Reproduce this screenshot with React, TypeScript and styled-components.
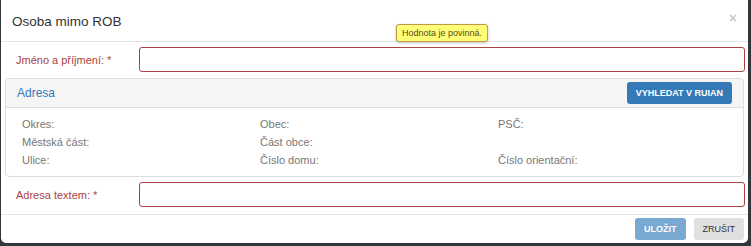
import React from 'react'
import styled, { createGlobalStyle } from 'styled-components'

const GlobalStyle = createGlobalStyle`
  html, body {
    margin: 0;
    padding: 0;
    background: #34373a;
    font-family: 'Liberation Sans', Arial, sans-serif;
  }
`

const Backdrop = styled.div`
  width: 751px;
  height: 246px;
  padding: 0 3px 3px 1px;
  box-sizing: border-box;
  overflow: hidden;
`

const Modal = styled.div`
  position: relative;
  width: 747px;
  height: 243px;
  background: #fff;
  border-radius: 0 0 5px 5px;
  display: flex;
  flex-direction: column;
  color: #333;
`

const Header = styled.div`
  height: 41px;
  border-bottom: 1px solid #e5e5e5;
  display: flex;
  align-items: center;
  justify-content: space-between;
  padding: 0 11px 0 11px;
  flex-shrink: 0;
`

const Title = styled.h4`
  margin: 0;
  font-size: 13.5px;
  font-weight: normal;
  color: #333;
  padding-top: 1px;
`

const Close = styled.span`
  font-size: 14px;
  font-weight: bold;
  color: #000;
  opacity: 0.2;
  line-height: 1;
  margin-top: -6px;
`

const Body = styled.div`
  padding: 5px 3px 0 4px;
`

const FormRow = styled.div`
  display: grid;
  grid-template-columns: 123px 1fr;
  align-items: center;
  padding-left: 11px;
`

const Label = styled.label`
  font-size: 11px;
  color: #a94442;
`

const Input = styled.input`
  height: 25px;
  box-sizing: border-box;
  border: 1px solid #a94442;
  border-radius: 3px;
  background: #fff;
  outline: none;
  width: 100%;
`

const Panel = styled.div`
  margin: 6px 1px 5px 0;
  border: 1px solid #ddd;
  border-radius: 4px;
  overflow: hidden;
`

const PanelHeading = styled.div`
  height: 28px;
  background: #f5f5f5;
  border-bottom: 1px solid #ddd;
  display: flex;
  align-items: center;
  justify-content: space-between;
  padding: 0 11px 0 11px;
`

const PanelTitle = styled.span`
  font-size: 12px;
  color: #337ab7;
`

const Button = styled.button<{ $variant: 'primary' | 'default'; $disabled?: boolean }>`
  font-family: 'Liberation Sans', Arial, sans-serif;
  height: 22px;
  border: none;
  border-radius: 3px;
  padding: 0 9px;
  font-size: 9px;
  font-weight: ${({ $variant }) => ($variant === 'primary' ? 'bold' : 'normal')};
  background: ${({ $variant }) => ($variant === 'primary' ? '#337ab7' : '#e0e0e0')};
  color: ${({ $variant }) => ($variant === 'primary' ? '#fff' : '#333')};
  opacity: ${({ $disabled }) => ($disabled ? 0.65 : 1)};
  cursor: pointer;
`

const PanelBody = styled.div`
  display: grid;
  grid-template-columns: repeat(3, 238px);
  grid-auto-rows: 18px;
  padding: 7px 0 7px 16px;
  align-items: center;
`

const Field = styled.span`
  font-size: 11px;
  color: #777;
`

const Footer = styled.div`
  margin-top: auto;
  height: 29px;
  border-top: 1px solid #e5e5e5;
  display: flex;
  align-items: center;
  justify-content: flex-end;
  gap: 8px;
  padding: 0 4px 0 0;
  box-sizing: border-box;
`

const Tooltip = styled.div`
  position: absolute;
  left: 395px;
  top: 24px;
  height: 18px;
  padding: 0 5px;
  box-sizing: border-box;
  display: flex;
  align-items: center;
  font-size: 9px;
  color: #5a4a1a;
  background: #ffff77;
  border: 1px solid #c09a4a;
  border-radius: 3px;
  box-shadow: 0 1px 3px rgba(0, 0, 0, 0.25);
`

const fields = [
  'Okres:', 'Obec:', 'PSČ:',
  'Městská část:', 'Část obce:', '',
  'Ulice:', 'Číslo domu:', 'Číslo orientační:'
]

const App: React.FC = () => {
  return (
    <Backdrop>
      <GlobalStyle />
      <Modal>
        <Header>
          <Title>Osoba mimo ROB</Title>
          <Close>×</Close>
        </Header>
        <Body>
          <FormRow>
            <Label>Jméno a příjmení: *</Label>
            <Input />
          </FormRow>
          <Panel>
            <PanelHeading>
              <PanelTitle>Adresa</PanelTitle>
              <Button $variant="primary">VYHLEDAT V RUIAN</Button>
            </PanelHeading>
            <PanelBody>
              {fields.map((f, i) => (
                <Field key={i}>{f}</Field>
              ))}
            </PanelBody>
          </Panel>
          <FormRow>
            <Label>Adresa textem: *</Label>
            <Input />
          </FormRow>
        </Body>
        <Footer>
          <Button $variant="primary" $disabled>ULOŽIT</Button>
          <Button $variant="default">ZRUŠIT</Button>
        </Footer>
        <Tooltip>Hodnota je povinná.</Tooltip>
      </Modal>
    </Backdrop>
  )
}

export default App
